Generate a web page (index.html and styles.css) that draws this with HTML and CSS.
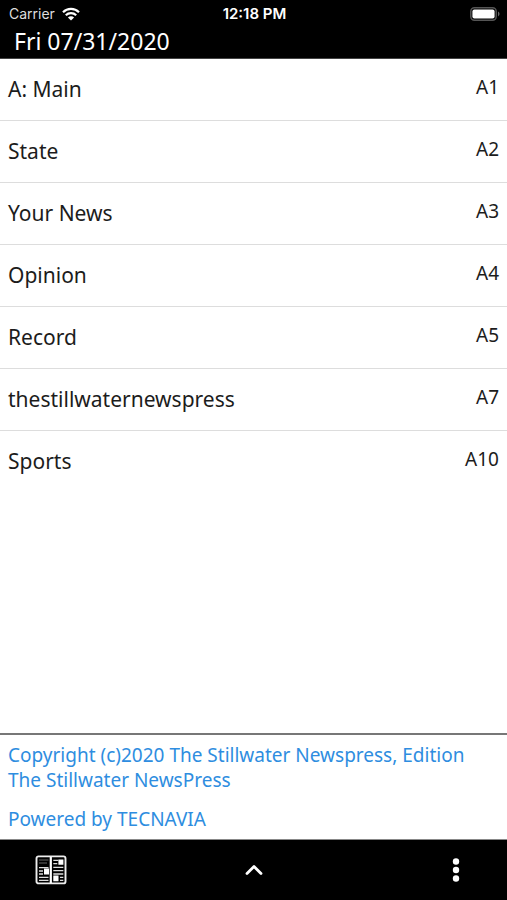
FILE: index.html
```html
<!DOCTYPE html>
<html lang="en">
<head>
<meta charset="utf-8">
<meta name="viewport" content="width=device-width, initial-scale=1">
<title>Sections</title>
<link rel="stylesheet" href="styles.css">
</head>
<body>
<header class="header">
  <div class="status">
    <div class="carrier">
      <span>Carrier</span>
      <svg class="wifi" viewBox="0 0 18 14" aria-hidden="true">
        <path d="M1 5.2a11.4 11.4 0 0 1 16 0M3.8 8.2a7.4 7.4 0 0 1 10.4 0" fill="none" stroke="#fff" stroke-width="2.2"/>
        <path d="M9 13.6 5.9 10.5a4.4 4.4 0 0 1 6.2 0z" fill="#fff"/>
      </svg>
    </div>
    <span class="clock">12:18 PM</span>
    <svg class="battery" viewBox="0 0 30 14" aria-hidden="true">
      <rect x=".8" y=".8" width="25.4" height="12.4" rx="3.6" fill="#000" stroke="#555" stroke-width="1.5"/>
      <rect x="2.4" y="2.4" width="22.2" height="9.2" rx="2" fill="#fff"/>
      <path d="M28 4.6c2 .9 2 3.9 0 4.8z" fill="#666"/>
    </svg>
  </div>
  <h1 class="date">Fri 07/31/2020</h1>
</header>
<main class="main">
  <nav aria-label="Sections">
    <ul class="sections">
      <li><a class="row" href="#a1"><span>A: Main</span><span class="page">A1</span></a></li>
      <li><a class="row" href="#a2"><span>State</span><span class="page">A2</span></a></li>
      <li><a class="row" href="#a3"><span>Your News</span><span class="page">A3</span></a></li>
      <li><a class="row" href="#a4"><span>Opinion</span><span class="page">A4</span></a></li>
      <li><a class="row" href="#a5"><span>Record</span><span class="page">A5</span></a></li>
      <li><a class="row" href="#a7"><span>thestillwaternewspress</span><span class="page">A7</span></a></li>
      <li><a class="row" href="#a10"><span>Sports</span><span class="page">A10</span></a></li>
    </ul>
  </nav>
</main>
<footer class="credits">
  <p><a href="#copyright">Copyright (c)2020 The Stillwater Newspress, Edition<br>The Stillwater NewsPress</a></p>
  <p><a href="#tecnavia">Powered by TECNAVIA</a></p>
</footer>
<div class="toolbar">
  <button class="tool" type="button" aria-label="Pages">
    <svg class="paper" viewBox="0 0 32 30" aria-hidden="true">
      <rect x="1.5" y="1.4" width="29" height="27" rx="2" fill="#000" stroke="#eee" stroke-width="1.9"/>
      <path d="M15.8 2v26" stroke="#fff" stroke-width="2.2"/>
      <path d="M4 5h9.500M4 8h8" stroke="#666" stroke-width="1.200"/>
      <path d="M4 12.600h9.500M4 16h4M4 19h4M4 22.400h9.500M4 25.400h9.500M18.300 5.400h5M18.300 8.600h4M18.300 12.300h10M18.300 15.600h10M18.300 19h10M25 22.400h3.300M25 25.400h3.300" stroke="#ddd" stroke-width="1.300"/>
      <path d="M9 13.600h5v6H9zM23.400 4.400h5v5.400h-5zM18.300 20.400h5.200v5.800h-5.200z" fill="#fff"/>
    </svg>
  </button>
  <button class="tool" type="button" aria-label="Expand">
    <svg class="chevron" viewBox="0 0 20 14" aria-hidden="true">
      <path d="m3 10.500 7-7 7 7" fill="none" stroke="#fff" stroke-width="2.800" stroke-linecap="round" stroke-linejoin="round"/>
    </svg>
  </button>
  <button class="tool" type="button" aria-label="More">
    <svg class="dots" viewBox="0 0 8 26" aria-hidden="true">
      <g fill="#fff"><circle cx="4" cy="4.500" r="3.200"/><circle cx="4" cy="13" r="3.200"/><circle cx="4" cy="21.500" r="3.200"/></g>
    </svg>
  </button>
</div>
</body>
</html>
```
FILE: styles.css
```css
* {
  box-sizing: border-box;
}

body {
  margin: 0;
  min-height: 100vh;
  display: flex;
  flex-direction: column;
  background: #fff;
  color: #1c1c1c;
  font-family: "Noto Sans", "Open Sans", sans-serif;
}

h1, p, ul {
  margin: 0;
  padding: 0;
  font-weight: 400;
}

a {
  color: inherit;
  text-decoration: none;
}

svg {
  display: block;
}

.header {
  background: #000;
  color: #fff;
  border-bottom: 1px solid #444;
}

.status {
  display: grid;
  grid-template-columns: 1fr auto 1fr;
  align-items: center;
  height: 27px;
  padding: 0 7px 0 9px;
  font: 14px/27px Inter, sans-serif;
}

.carrier {
  display: flex;
  align-items: center;
  gap: 7px;
  color: #ddd;
}

.wifi {
  width: 18px;
  height: 14px;
}

.clock {
  font-size: 15px;
  font-weight: 600;
}

.battery {
  width: 30px;
  height: 14px;
  justify-self: end;
}

.date {
  padding: 0 14px 3px;
  font-size: 23px;
  line-height: 28px;
}

.main {
  flex: 1;
}

.sections {
  list-style: none;
}

.sections li + li {
  border-top: 1px solid #ddd;
}

.row {
  display: flex;
  justify-content: space-between;
  padding: 16px 8px 17px;
  font-size: 21px;
  line-height: 28px;
}

.page {
  font-size: 19px;
  line-height: 25px;
}

.credits {
  display: grid;
  gap: 14px;
  padding: 8px 8px 7px;
  border-top: 2px solid #777;
  border-bottom: 1px solid #888;
  color: #2e8de0;
  font-size: 19px;
  line-height: 25px;
}

.toolbar {
  display: flex;
  align-items: center;
  justify-content: space-between;
  height: 60px;
  padding: 0 29px;
  background: #000;
}

.tool {
  display: grid;
  place-items: center;
  width: 44px;
  height: 44px;
  padding: 0;
  border: 0;
  background: none;
}

.paper {
  width: 32px;
  height: 30px;
}

.chevron {
  width: 20px;
  height: 14px;
}

.dots {
  width: 8px;
  height: 26px;
}
```
